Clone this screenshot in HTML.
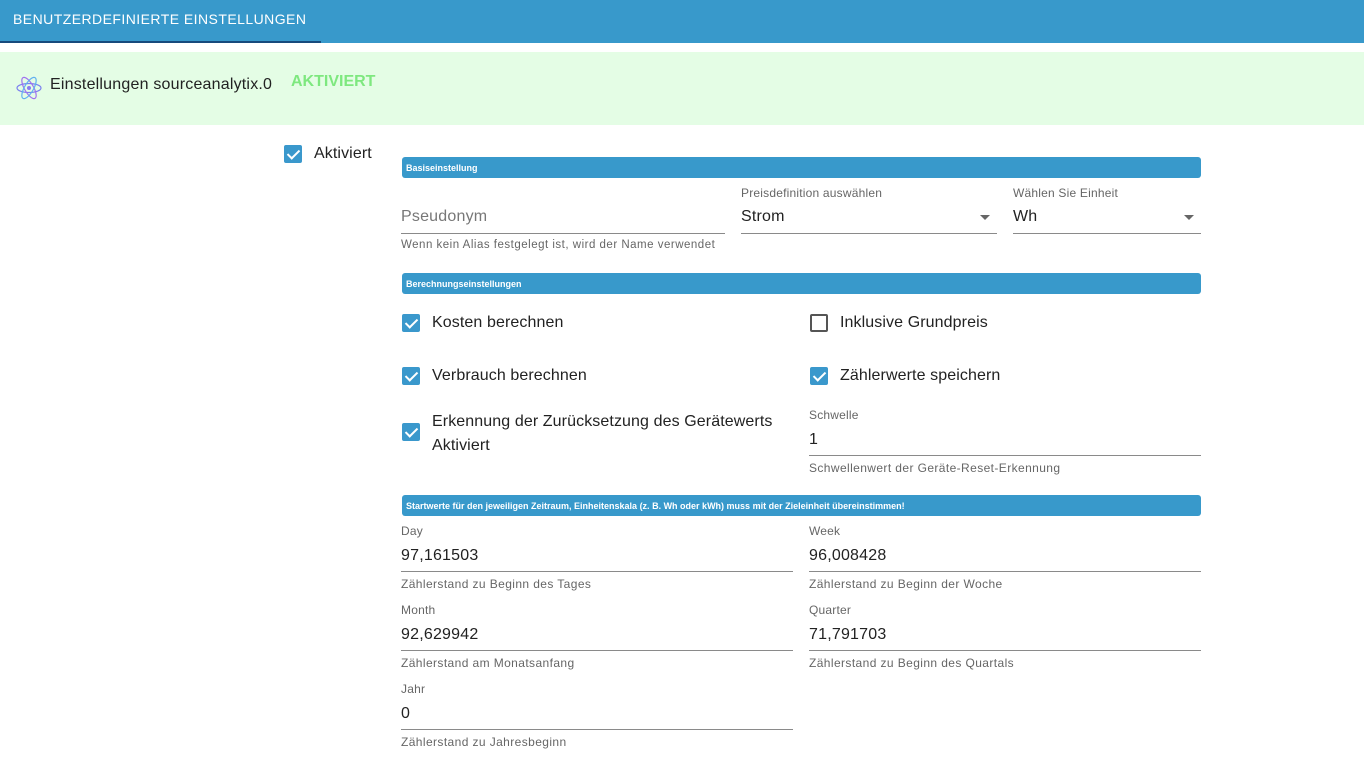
<!DOCTYPE html><html><head><meta charset="utf-8"><style>
*{box-sizing:border-box;margin:0;padding:0}
body{width:1364px;height:758px;overflow:hidden;background:#fff;font-family:"Liberation Sans",sans-serif;position:relative;color:#222}
.a{position:absolute}
.hdr{left:0;top:0;width:1364px;height:43px;background:#3899cb}
.bar{position:absolute;left:402px;width:799px;height:21px;background:#3899cb;border-radius:3px;color:#fff;font-weight:bold;font-size:9px;padding:6px 0 0 4px}
.lbl{position:absolute;font-size:12px;color:#666;letter-spacing:.2px}
.val{position:absolute;font-size:16px;color:#222;letter-spacing:.2px}
.hint{position:absolute;font-size:12px;color:#666;letter-spacing:.4px}
.ln{position:absolute;height:1px;background:#8a8a8a}
.cb{position:absolute;width:18px;height:18px;background:#3a98cc;border-radius:2px}
.cb:after{content:"";position:absolute;left:6px;top:2px;width:5px;height:10px;border:solid #fff;border-width:0 2px 2px 0;transform:rotate(45deg)}
.cbx{position:absolute;width:18px;height:18px;border:2px solid #555;border-radius:2px}
.ct{position:absolute;font-size:16px;color:#222;letter-spacing:.1px}
.arr{position:absolute;width:0;height:0;border-left:5px solid transparent;border-right:5px solid transparent;border-top:5px solid #666}
</style></head><body>
<div class="a hdr"></div>
<div class="a" style="left:13px;top:11px;color:#fff;font-size:14px;letter-spacing:.45px">BENUTZERDEFINIERTE EINSTELLUNGEN</div>
<div class="a" style="left:0;top:41px;width:321px;height:2px;background:#174a7c"></div>
<div class="a" style="left:0;top:52px;width:1364px;height:73px;background:#e4fde5"></div>
<svg class="a" style="left:15px;top:74px" width="28" height="28" viewBox="0 0 28 28" fill="none" stroke-width="1.2"><ellipse cx="14" cy="14" rx="12" ry="4.5" stroke="#7a7ff0"/><ellipse cx="14" cy="14" rx="12" ry="4.5" stroke="#a070f0" transform="rotate(60 14 14)"/><ellipse cx="14" cy="14" rx="12" ry="4.5" stroke="#60b0f0" transform="rotate(-60 14 14)"/><circle cx="14" cy="14" r="2" fill="#8a7af0" stroke="none"/></svg>
<div class="a" style="left:50px;top:76px;font-size:16px;color:#222;letter-spacing:.2px">Einstellungen sourceanalytix.0</div>
<div class="a" style="left:291px;top:73px;font-size:16px;font-weight:bold;color:#7ee87f">AKTIVIERT</div>
<div class="cb" style="left:284px;top:145px"></div><div class="ct" style="left:314px;top:145px">Aktiviert</div>
<div class="bar" style="top:157px">Basiseinstellung</div>
<div class="val" style="left:401px;top:208px;color:#777">Pseudonym</div><div class="ln" style="left:401px;top:233px;width:324px"></div>
<div class="hint" style="left:401px;top:239px;font-size:11.5px;letter-spacing:.5px">Wenn kein Alias festgelegt ist, wird der Name verwendet</div>
<div class="lbl" style="left:741px;top:186px">Preisdefinition auswählen</div><div class="val" style="left:741px;top:208px">Strom</div><div class="arr" style="left:980px;top:215px"></div><div class="ln" style="left:741px;top:233px;width:256px"></div>
<div class="lbl" style="left:1013px;top:186px">Wählen Sie Einheit</div><div class="val" style="left:1013px;top:208px">Wh</div><div class="arr" style="left:1184px;top:215px"></div><div class="ln" style="left:1013px;top:233px;width:188px"></div>
<div class="bar" style="top:273px">Berechnungseinstellungen</div>
<div class="cb" style="left:402px;top:314px"></div><div class="ct" style="left:432px;top:314px">Kosten berechnen</div>
<div class="cbx" style="left:810px;top:314px"></div><div class="ct" style="left:840px;top:314px">Inklusive Grundpreis</div>
<div class="cb" style="left:402px;top:367px"></div><div class="ct" style="left:432px;top:367px">Verbrauch berechnen</div>
<div class="cb" style="left:810px;top:367px"></div><div class="ct" style="left:840px;top:367px">Zählerwerte speichern</div>
<div class="cb" style="left:402px;top:423px"></div><div class="ct" style="left:432px;top:410px;line-height:24px">Erkennung der Zurücksetzung des Gerätewerts<br>Aktiviert</div>
<div class="lbl" style="left:809px;top:408px">Schwelle</div><div class="val" style="left:809px;top:431px">1</div><div class="ln" style="left:809px;top:455px;width:392px"></div><div class="hint" style="left:809px;top:461px">Schwellenwert der Geräte-Reset-Erkennung</div>
<div class="bar" style="top:495px">Startwerte für den jeweiligen Zeitraum, Einheitenskala (z. B. Wh oder kWh) muss mit der Zieleinheit übereinstimmen!</div>
<div class="lbl" style="left:401px;top:524px">Day</div><div class="val" style="left:401px;top:547px">97,161503</div><div class="ln" style="left:401px;top:571px;width:392px"></div><div class="hint" style="left:401px;top:577px">Zählerstand zu Beginn des Tages</div>
<div class="lbl" style="left:809px;top:524px">Week</div><div class="val" style="left:809px;top:547px">96,008428</div><div class="ln" style="left:809px;top:571px;width:392px"></div><div class="hint" style="left:809px;top:577px">Zählerstand zu Beginn der Woche</div>
<div class="lbl" style="left:401px;top:603px">Month</div><div class="val" style="left:401px;top:626px">92,629942</div><div class="ln" style="left:401px;top:650px;width:392px"></div><div class="hint" style="left:401px;top:656px">Zählerstand am Monatsanfang</div>
<div class="lbl" style="left:809px;top:603px">Quarter</div><div class="val" style="left:809px;top:626px">71,791703</div><div class="ln" style="left:809px;top:650px;width:392px"></div><div class="hint" style="left:809px;top:656px">Zählerstand zu Beginn des Quartals</div>
<div class="lbl" style="left:401px;top:682px">Jahr</div><div class="val" style="left:401px;top:705px">0</div><div class="ln" style="left:401px;top:729px;width:392px"></div><div class="hint" style="left:401px;top:735px">Zählerstand zu Jahresbeginn</div>
</body></html>
